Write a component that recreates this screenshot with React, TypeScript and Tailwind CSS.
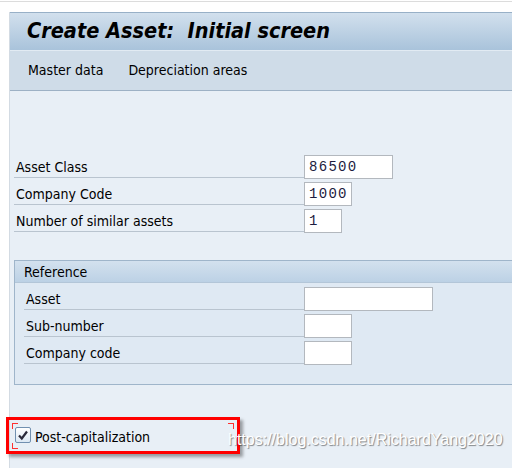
import React from "react";

const F = { fontFamily: "Tahoma, 'DejaVu Sans Condensed', 'Liberation Sans', sans-serif" };

function Row({ label, w, lw, value }: { label: string; w: string; lw: string; value?: string }) {
  return (
    <div className="flex items-start h-[24px] mb-[3px]">
      <div className={`${lw} h-[23px] border-b border-[#b9c4cf] pl-[2px] text-[14px] leading-[24px] text-black`}>{label}</div>
      <div
        className={`${w} h-[24px] bg-white border border-[#b3b8be] pl-[4px] text-[14px] leading-[22px] tracking-[1.3px] text-[#1c1c40]`}
        style={{ fontFamily: "'Liberation Mono', monospace" }}
      >
        {value}
      </div>
    </div>
  );
}

export default function App() {
  return (
    <div className="relative w-[512px] h-[468px] bg-white overflow-hidden" style={F}>
      <div className="h-[1px]" />
      <div className="h-[1px] bg-[#dcdcdc]" />
      <div className="h-[10px] bg-white" />
      <div className="ml-[9px] border-l border-[#d3dbe3] h-[456px] flex flex-col">
        <div className="h-[38px] border-t border-[#98b0c7] bg-gradient-to-b from-[#d2e0ed] to-[#a9c3db] pl-[17px] flex items-center">
          <span className="text-[21.5px] font-bold italic text-black" style={{ fontFamily: "Tahoma, 'DejaVu Sans Condensed', Verdana, sans-serif" }}>
            Create Asset:&nbsp; Initial screen
          </span>
        </div>
        <div className="h-[41px] border-t border-[#e2ebf3] border-b border-b-[#9db1c5] bg-[#cfdce8] flex items-center pl-[18px] gap-[25px] text-[14px] text-black">
          <span>Master data</span>
          <span>Depreciation areas</span>
        </div>
        <div className="flex-1 bg-[#e8eff6] pt-[64px] pl-[4px] relative">
          <Row label="Asset Class" lw="w-[290px]" w="w-[89px]" value="86500" />
          <Row label="Company Code" lw="w-[290px]" w="w-[48px]" value="1000" />
          <Row label="Number of similar assets" lw="w-[290px]" w="w-[38px]" value="1" />
          <div className="mt-[27px] w-[520px] border border-[#9fb5ca] bg-[#dfe9f3] h-[125px]">
            <div className="h-[22px] bg-gradient-to-b from-[#d3e1ee] to-[#bcd1e5] border-b border-[#b3c6d8] pl-[9px] text-[14px] leading-[22px] text-black">
              Reference
            </div>
            <div className="pt-[4px] pl-[9px]">
              <Row label="Asset" lw="w-[280px]" w="w-[129px]" />
              <Row label="Sub-number" lw="w-[280px]" w="w-[48px]" />
              <Row label="Company code" lw="w-[280px]" w="w-[48px]" />
            </div>
          </div>
          <div className="mt-[42px] ml-[1px] flex items-center gap-[4px] h-[16px]">
            <div className="w-[16px] h-[16px] border border-[#7190b0] rounded-[2px] bg-gradient-to-b from-white to-[#dce8f4] flex items-center justify-center">
              <svg width="12" height="12" viewBox="0 0 12 12">
                <path d="M2 6.5 L4.8 9.5 L10 2.5" fill="none" stroke="#2a2a3a" strokeWidth="2.2" />
              </svg>
            </div>
            <span className="text-[14px] leading-[18px] pt-[4px] text-black">Post-capitalization</span>
          </div>
        </div>
      </div>
      {/* annotation */}
      <div className="absolute left-[6px] top-[417px] w-[234px] h-[37px] border-[3px] border-[#ff0000] shadow-[3px_3px_3px_rgba(0,0,0,0.35)]">
        <div className="absolute left-[3px] top-[3px] w-[6px] h-[6px] border-l border-t border-[#ff3030]" />
        <div className="absolute right-[3px] top-[3px] w-[6px] h-[6px] border-r border-t border-[#ff3030]" />
        <div className="absolute left-[3px] bottom-[2px] w-[6px] h-[6px] border-l border-b border-[#ff3030]" />
      </div>
      <div
        className="absolute left-[228px] top-[428px] text-[16px] text-white"
        style={{ fontFamily: "'Liberation Sans', Arial, sans-serif", textShadow: "1px 1px 1px rgba(0,0,0,0.45)" }}
      >
        https://blog.csdn.net/RichardYang2020
      </div>
    </div>
  );
}
